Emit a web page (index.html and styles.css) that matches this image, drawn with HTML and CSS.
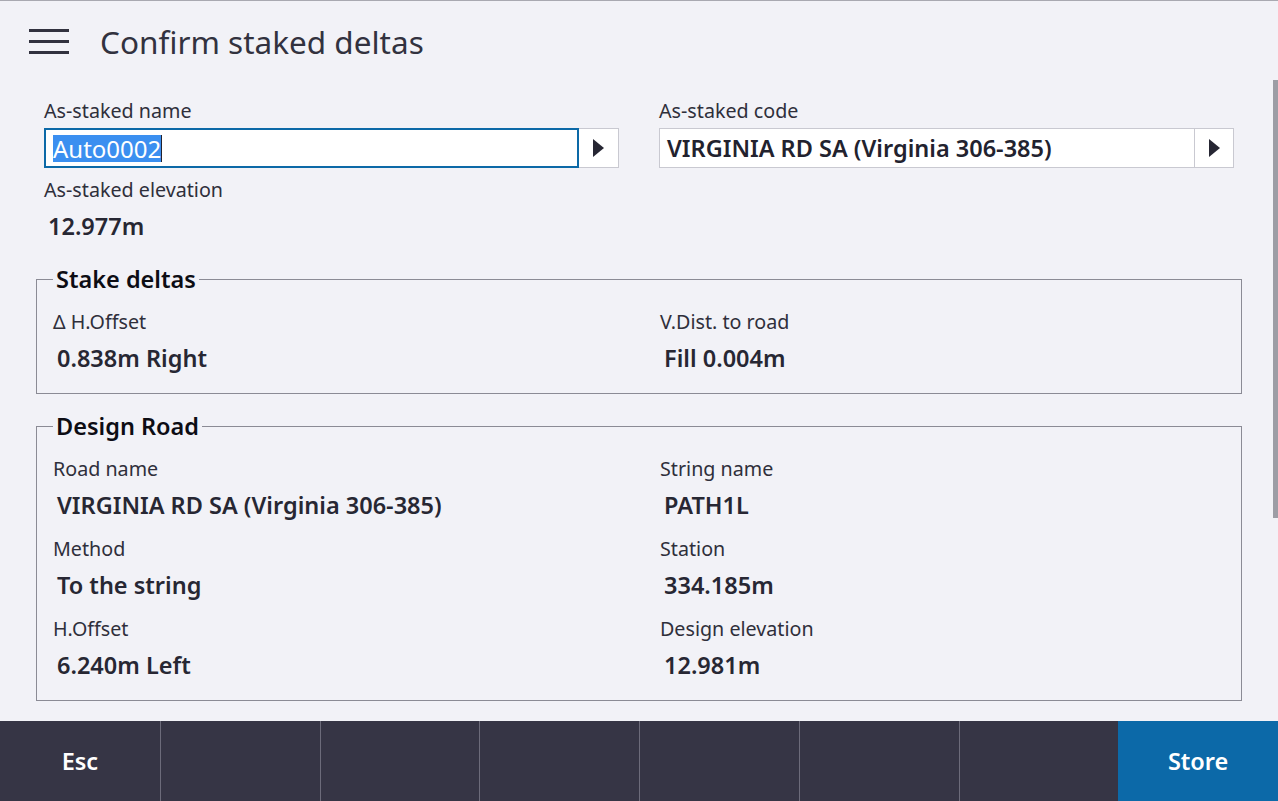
FILE: index.html
```html
<!DOCTYPE html>
<html lang="en">

<head>
    <meta charset="UTF-8">
    <meta name="viewport" content="width=device-width, initial-scale=1.0">
    <title>Confirm staked deltas</title>
    <link rel="stylesheet" href="styles.css">
</head>

<body>
    <div class="screen">
        <header class="title-bar">
            <div class="menu-icon">
                <span></span><span></span><span></span>
            </div>
            <h1>Confirm staked deltas</h1>
        </header>

        <main class="content">
            <div class="top-fields">
                <div class="field">
                    <div class="label">As-staked name</div>
                    <div class="input-row focused">
                        <div class="input-text"><span class="selected">Auto0002</span><span class="caret"></span></div>
                        <div class="arrow-btn"><span class="arrow"></span></div>
                    </div>
                    <div class="label spaced">As-staked elevation</div>
                    <div class="value">12.977m</div>
                </div>
                <div class="field">
                    <div class="label">As-staked code</div>
                    <div class="input-row">
                        <div class="input-text bold">VIRGINIA RD SA (Virginia 306-385)</div>
                        <div class="arrow-btn"><span class="arrow"></span></div>
                    </div>
                </div>
            </div>

            <fieldset class="group">
                <legend>Stake deltas</legend>
                <div class="grid">
                    <div class="item">
                        <div class="label">&Delta; H.Offset</div>
                        <div class="value">0.838m Right</div>
                    </div>
                    <div class="item">
                        <div class="label">V.Dist. to road</div>
                        <div class="value">Fill 0.004m</div>
                    </div>
                </div>
            </fieldset>

            <fieldset class="group">
                <legend>Design Road</legend>
                <div class="grid">
                    <div class="item">
                        <div class="label">Road name</div>
                        <div class="value">VIRGINIA RD SA (Virginia 306-385)</div>
                    </div>
                    <div class="item">
                        <div class="label">String name</div>
                        <div class="value">PATH1L</div>
                    </div>
                    <div class="item">
                        <div class="label">Method</div>
                        <div class="value">To the string</div>
                    </div>
                    <div class="item">
                        <div class="label">Station</div>
                        <div class="value">334.185m</div>
                    </div>
                    <div class="item">
                        <div class="label">H.Offset</div>
                        <div class="value">6.240m Left</div>
                    </div>
                    <div class="item">
                        <div class="label">Design elevation</div>
                        <div class="value">12.981m</div>
                    </div>
                </div>
            </fieldset>

            <div class="scrollbar"></div>
        </main>

        <footer class="softkeys">
            <button class="key">Esc</button>
            <button class="key"></button>
            <button class="key"></button>
            <button class="key"></button>
            <button class="key"></button>
            <button class="key"></button>
            <button class="key"></button>
            <button class="key primary">Store</button>
        </footer>
    </div>
</body>

</html>
```

FILE: styles.css
```css
/* General Styles */
* {
    box-sizing: border-box;
}

body {
    margin: 0;
    font-family: "Noto Sans", "Open Sans", sans-serif;
    background-color: #f2f2f7;
    color: #2c2c38;
}

.screen {
    height: 801px;
    display: flex;
    flex-direction: column;
    border-top: 1px solid #a9a9b1;
    overflow: hidden;
}

/* Title bar */
.title-bar {
    height: 79px;
    display: flex;
    align-items: center;
    padding-left: 29px;
    padding-top: 1px;
    flex-shrink: 0;
}

.menu-icon {
    width: 40px;
    display: flex;
    flex-direction: column;
    gap: 8px;
    margin-right: 31px;
}

.menu-icon span {
    display: block;
    height: 3px;
    background-color: #32323f;
}

h1 {
    margin: 0;
    font-size: 31.5px;
    font-weight: 400;
    color: #32323f;
}

/* Content */
.content {
    position: relative;
    flex: 1;
    padding: 19px 36px 0;
    overflow: hidden;
}

.scrollbar {
    position: absolute;
    top: 0;
    right: 0;
    width: 5px;
    height: 438px;
    background-color: #9d9da5;
}

.top-fields {
    display: grid;
    grid-template-columns: 575px 575px;
    gap: 40px;
    padding: 0 8px;
}

.label {
    font-size: 19.7px;
    line-height: 24px;
    color: #2f2f3b;
}

.label.spaced {
    margin-top: 10px;
}

.value {
    margin-top: 9px;
    padding-left: 4px;
    font-size: 23.5px;
    line-height: 30px;
    font-weight: 600;
    color: #272733;
}

.input-row {
    display: flex;
    height: 40px;
    margin-top: 5px;
    background-color: #fff;
    border: 1px solid #c9c9d1;
}

.input-text {
    flex: 1;
    display: flex;
    align-items: center;
    padding-left: 7px;
    font-size: 24px;
    color: #22222e;
    white-space: nowrap;
}

.input-text.bold {
    font-size: 23.5px;
    font-weight: 600;
}

.input-row.focused .input-text {
    border: 2px solid #0c69a7;
    margin: -1px 0 -1px -1px;
    padding-left: 7px;
}

.selected {
    background-color: #3b8ff0;
    color: #fff;
    line-height: 27px;
}

.caret {
    display: inline-block;
    width: 1px;
    height: 27px;
    background-color: #22222e;
}

.arrow-btn {
    width: 39px;
    display: flex;
    align-items: center;
    justify-content: center;
    border-left: 1px solid #c9c9d1;
}

.input-row.focused .arrow-btn {
    border-left: none;
}

.arrow {
    width: 0;
    height: 0;
    border-top: 9px solid transparent;
    border-bottom: 9px solid transparent;
    border-left: 11px solid #262633;
}

/* Groups */
.group {
    margin: 23px 0 0;
    padding: 16px 16px 20px;
    border: 1px solid #8b8b95;
}

.group + .group {
    margin-top: 17px;
}

.group legend {
    padding: 0 3px;
    font-size: 23.5px;
    line-height: 30px;
    font-weight: 600;
    color: #0d0d14;
}

.grid {
    display: grid;
    grid-template-columns: 607px 1fr;
    row-gap: 17px;
}

/* Softkeys */
.softkeys {
    height: 80px;
    display: grid;
    grid-template-columns: repeat(8, 1fr);
    background-color: #363545;
    flex-shrink: 0;
}

.key {
    border: none;
    border-left: 1px solid #6c6b7a;
    background-color: transparent;
    color: #fff;
    font-family: "Noto Sans", "Open Sans", sans-serif;
    font-size: 23.5px;
    font-weight: 600;
    padding: 0;
}

.key:first-child {
    border-left: none;
}

.key.primary {
    background-color: #0c69a8;
    border-left: none;
}
```
